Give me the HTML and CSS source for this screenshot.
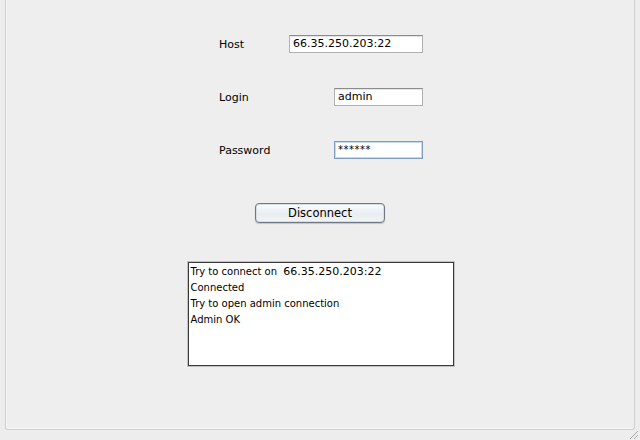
FILE: index.html
```html
<!DOCTYPE html>
<html lang="en">
<head>
    <meta charset="UTF-8">
    <title>Admin connection</title>
    <link rel="stylesheet" href="styles.css">
</head>
<body>
    <div class="janela">
        <div class="campos">
            <div class="linha">
                <span class="rotulo">Host</span>
                <div class="caixa host">66.35.250.203:22</div>
            </div>
            <div class="linha">
                <span class="rotulo">Login</span>
                <div class="caixa curta">admin</div>
            </div>
            <div class="linha">
                <span class="rotulo">Password</span>
                <div class="caixa curta foco senha">******</div>
            </div>
        </div>

        <button class="botao">Disconnect</button>

        <div class="log">
            <div>Try to connect on <span class="ip">66.35.250.203:22</span></div>
            <div>Connected</div>
            <div>Try to open admin connection</div>
            <div>Admin OK</div>
        </div>
    </div>
    <div class="rodape">
        <svg class="grip" width="12" height="12" viewBox="0 0 12 12">
            <line x1="11" y1="3" x2="3" y2="11" stroke="#a8a8a8" stroke-width="1"/>
            <line x1="11" y1="7" x2="7" y2="11" stroke="#a8a8a8" stroke-width="1"/>
        </svg>
    </div>
</body>
</html>
```

FILE: styles.css
```css
* {
    margin: 0;
    padding: 0;
    box-sizing: border-box;
    font-family: 'DejaVu Sans', 'Liberation Sans', Arial, sans-serif;
}

body {
    width: 640px;
    height: 440px;
    background: #ededed;
    color: #000;
    overflow: hidden;
}

/* Janela */
.janela {
    margin-left: 5px;
    width: 630px;
    height: 430px;
    border-left: 1px solid #cfcfcf;
    border-right: 1px solid #cfcfcf;
    border-bottom: 1px solid #cfcfcf;
    border-radius: 0 0 3px 3px;
    box-shadow: inset 1px 0 0 #f7f7f7, inset 0 -1px 0 #f7f7f7;
    background: #eeeeee;
    display: flex;
    flex-direction: column;
    align-items: center;
}

/* Campos do formulario */
.campos {
    width: 205px;
    margin-top: 35px;
    margin-left: 1px;
    display: flex;
    flex-direction: column;
    gap: 35px;
}

.linha {
    height: 18px;
    display: flex;
    align-items: center;
    justify-content: space-between;
}

.rotulo {
    font-size: 11px;
    line-height: 18px;
    padding-left: 1px;
    padding-top: 2px;
}

.caixa {
    height: 18px;
    background: #fff;
    border: 1px solid #b0b0b0;
    border-top-color: #8c8c8c;
    box-shadow: inset 0 1px 0 #e4e4e4;
    font-size: 11px;
    line-height: 16px;
    padding-left: 3px;
    white-space: nowrap;
}

.host {
    width: 134px;
}

.curta {
    width: 89px;
}

.foco {
    border: 1px solid #7f9cbf;
    box-shadow: inset 0 0 0 1px #c9daec;
}

.senha {
    font-size: 10px;
    letter-spacing: 0.5px;
}

/* Botao */
.botao {
    margin-top: 44px;
    width: 130px;
    height: 20px;
    font-size: 11.5px;
    color: #000;
    background: linear-gradient(#fbfcfd, #e9edf1 55%, #f3f5f7);
    border: 1px solid #6f7985;
    border-radius: 4px;
    box-shadow: 0 1px 1px rgba(0, 0, 0, .18), inset 0 0 0 1px #d6dde5;
}

/* Log de saida */
.log {
    margin-top: 39px;
    margin-left: 1px;
    width: 266px;
    height: 104px;
    background: #fff;
    border: 1px solid #3a3a3a;
    box-shadow: 0 0 0 1px #c2c2c2;
    padding: 1px 2px;
    font-size: 10px;
    line-height: 16px;
}

.log .ip {
    font-size: 11px;
    margin-left: 3px;
}

/* Canto inferior */
.rodape {
    height: 10px;
    display: flex;
    justify-content: flex-end;
}

.grip {
    margin-top: -2px;
    margin-right: 1px;
}
```
